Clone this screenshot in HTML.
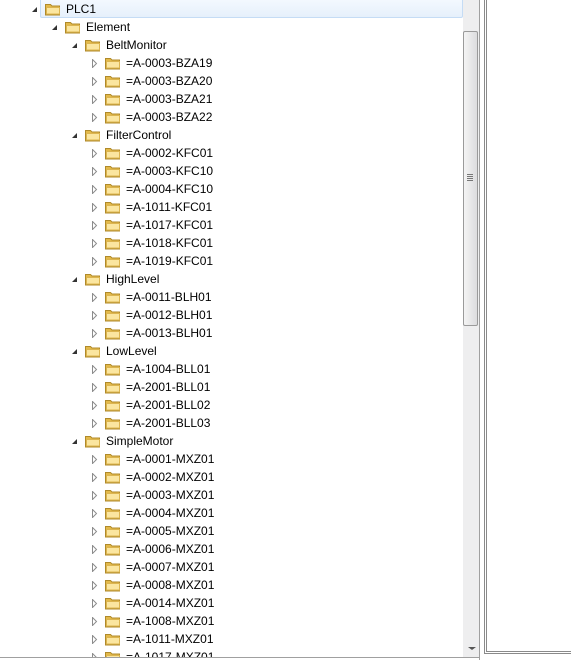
<!DOCTYPE html>
<html><head><meta charset="utf-8"><style>
body{margin:0;width:571px;height:660px;background:#fff;position:relative;overflow:hidden;font-family:"Liberation Sans",sans-serif;font-size:12px;color:#000}
.tree{position:absolute;left:0;top:0;width:463px;height:657px;overflow:hidden}
.r{position:absolute;height:18px;line-height:18px;white-space:nowrap}
.r svg{position:absolute}
.t{position:absolute;top:0}
.sel{position:absolute;left:40px;top:-2px;width:421px;height:18px;border:1px solid #c5dcf5;border-radius:2px;background:linear-gradient(#f4f9ff,#e6f0fb)}
</style></head><body>
<div class="tree" id="tree">
<div class="sel"></div>
</div>
<div style="position:absolute;left:463px;top:0;width:16px;height:657px;background:#eeeeef"></div>
<div style="position:absolute;left:463px;top:31px;width:13px;height:293px;border:1px solid #9a9a9a;border-radius:2px;background:linear-gradient(90deg,#f4f4f4,#dcdcde)"></div>
<div style="position:absolute;left:467px;top:174px;width:6px;height:1px;background:#777;box-shadow:0 2px 0 #777,0 4px 0 #777,0 6px 0 #777"></div>
<div style="position:absolute;left:466px;top:647px;width:0;height:0;border-left:4px solid transparent;border-right:4px solid transparent;border-top:3px solid #555;margin-left:2px"></div>
<div style="position:absolute;left:479px;top:0;width:1px;height:660px;background:#a0a0a0"></div>
<div style="position:absolute;left:0;top:657px;width:480px;height:1px;background:#a0a0a0"></div>
<div style="position:absolute;left:484px;top:-2px;width:90px;height:655px;border-left:1px solid #8a8a8a;border-bottom:1px solid #8a8a8a"></div>
<div style="position:absolute;left:486px;top:-2px;width:90px;height:653px;border-left:1px solid #8a8a8a;border-bottom:1px solid #8a8a8a"></div>
<script>
var rows=[[0,'PLC1',1],[1,'Element',1],[2,'BeltMonitor',1]];
['BZA19','BZA20','BZA21','BZA22'].forEach(function(s){rows.push([3,'=A-0003-'+s,0])});
rows.push([2,'FilterControl',1]);
['0002-KFC01','0003-KFC10','0004-KFC10','1011-KFC01','1017-KFC01','1018-KFC01','1019-KFC01'].forEach(function(s){rows.push([3,'=A-'+s,0])});
rows.push([2,'HighLevel',1]);
['0011-BLH01','0012-BLH01','0013-BLH01'].forEach(function(s){rows.push([3,'=A-'+s,0])});
rows.push([2,'LowLevel',1]);
['1004-BLL01','2001-BLL01','2001-BLL02','2001-BLL03'].forEach(function(s){rows.push([3,'=A-'+s,0])});
rows.push([2,'SimpleMotor',1]);
['0001','0002','0003','0004','0005','0006','0007','0008','0014','1008','1011','1017'].forEach(function(s){rows.push([3,'=A-'+s+'-MXZ01',0])});
var folder='<svg style="position:absolute;left:0;top:2px" width="17" height="14" viewBox="0 0 17 14"><path d="M1.5 2.5h5l1.5 1.5h7.5v9h-14z" fill="#e3b94a" stroke="#b08a2a"/><path d="M2.5 5.5h13v6.5h-13z" fill="#fbe6a0" stroke="#dcb550"/></svg>';
var exp='<svg style="position:absolute;left:0;top:6px" width="7" height="7" viewBox="0 0 7 7"><path d="M6 1V6H1z" fill="#333"/></svg>';
var col='<svg style="position:absolute;left:0;top:5px" width="7" height="9" viewBox="0 0 7 9"><path d="M1.5 0.5L5.5 4.5L1.5 8.5z" fill="#fff" stroke="#8c8c8c"/></svg>';
var h='';
rows.forEach(function(r,i){
 var x=20*r[0];
 h+='<div class="r" style="top:'+(18*i)+'px;left:'+x+'px;width:400px">'+
 '<span style="position:absolute;left:31px;top:0">'+(r[2]?exp:col)+'</span>'+
 '<span style="position:absolute;left:44px;top:0">'+folder+'</span>'+
 '<span class="t" style="left:66px">'+r[1]+'</span></div>';
});
document.getElementById('tree').insertAdjacentHTML('beforeend',h);
</script>
</body></html>
